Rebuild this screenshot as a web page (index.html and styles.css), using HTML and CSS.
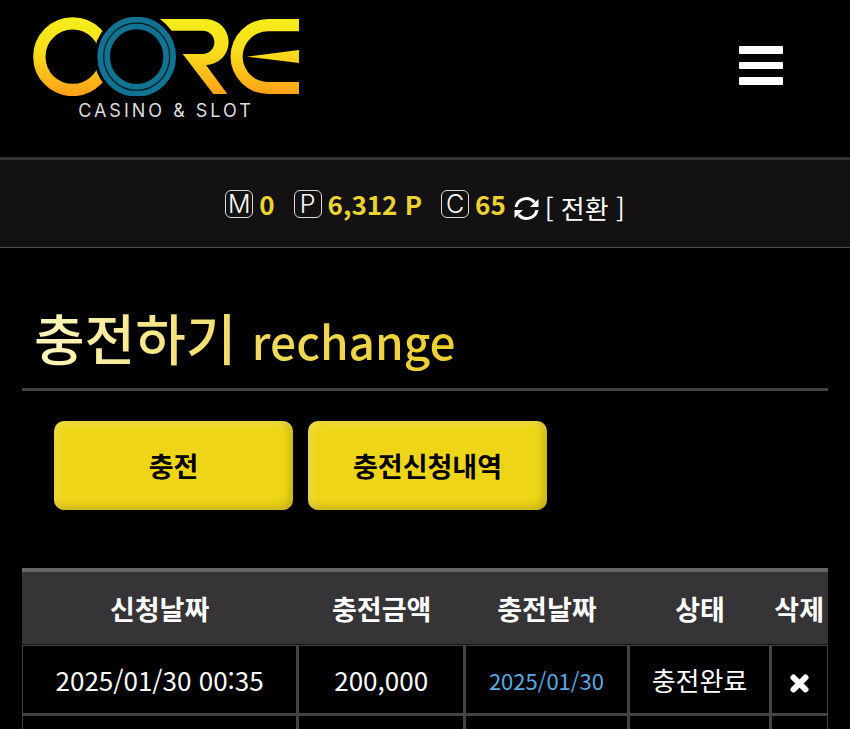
FILE: index.html
```html
<!DOCTYPE html>
<html lang="ko">
<head>
    <meta charset="UTF-8">
    <meta name="viewport" content="width=device-width, initial-scale=1.0">
    <title>CORE CASINO &amp; SLOT</title>
    <link rel="stylesheet" href="styles.css">
</head>
<body>
    <header class="header">
        <a class="logo" href="#" aria-label="CORE">
            <svg class="logo-mark" viewBox="39 36 798 237" aria-hidden="true">
                <defs>
                    <linearGradient id="gold" gradientUnits="userSpaceOnUse" x1="0" y1="36" x2="0" y2="273">
                        <stop offset="0" stop-color="#f6ee1c"/>
                        <stop offset="0.45" stop-color="#f8dc1c"/>
                        <stop offset="1" stop-color="#ff9f18"/>
                    </linearGradient>
                </defs>
                <circle cx="158" cy="155" r="100" fill="none" stroke="url(#gold)" stroke-width="37"/>
                <circle cx="350" cy="155" r="128" fill="#000"/>
                <ellipse cx="350" cy="155" rx="99" ry="101" fill="none" stroke="#127291" stroke-width="38"/>
                <ellipse cx="350" cy="155" rx="99" ry="101" fill="none" stroke="#04232f" stroke-width="4"/>
                <path fill="url(#gold)" d="M420 42H556a69 69 0 0 1 2 138L622 267H580L488 147H548a35 35 0 0 0 0-70H455Q440 57 420 42Z"/>
                <path fill="url(#gold)" d="M837 42H744a112 112 0 0 0 0 225H837V231H744a76 76 0 0 1 0-152H837Z"/>
                <path fill="url(#gold)" d="M680 155L837 135V174Z"/>
            </svg>
            <span class="logo-text">CASINO &amp; SLOT</span>
        </a>
        <button class="menu-btn" type="button" aria-label="메뉴">
            <svg width="44" height="39" viewBox="0 0 44 39" fill="#fff" aria-hidden="true">
                <rect width="44" height="8" rx="1"/>
                <rect y="16" width="44" height="7" rx="1"/>
                <rect y="31" width="44" height="8" rx="1"/>
            </svg>
        </button>
    </header>

    <div class="info">
        <div class="info-item"><span class="badge">M</span><b>0</b></div>
        <div class="info-item"><span class="badge">P</span><b>6,312 P</b></div>
        <div class="info-item"><span class="badge">C</span><b>65</b></div>
        <a class="convert" href="#">
            <svg width="25" height="25" viewBox="0 0 25 25" aria-hidden="true">
                <path d="M2 11A10.500 10.500 0 0 1 20.500 6.500M23 14A10.500 10.500 0 0 1 4.500 18.500" fill="none" stroke="#fff" stroke-width="3"/>
                <path d="M24.500 3V11H16ZM0.500 22V14H9Z" fill="#fff"/>
            </svg>
            <span>[ 전환 ]</span>
        </a>
    </div>

    <main class="content">
        <h1 class="title"><span>충전하기 <small>rechange</small></span></h1>

        <div class="buttons">
            <button class="btn" type="button">충전</button>
            <button class="btn" type="button">충전신청내역</button>
        </div>

        <table class="list">
            <colgroup>
                <col class="col-apply">
                <col class="col-amount">
                <col class="col-date">
                <col class="col-state">
                <col class="col-del">
            </colgroup>
            <thead>
                <tr>
                    <th>신청날짜</th>
                    <th>충전금액</th>
                    <th>충전날짜</th>
                    <th>상태</th>
                    <th>삭제</th>
                </tr>
            </thead>
            <tbody>
                <tr>
                    <td>2025/01/30 00:35</td>
                    <td>200,000</td>
                    <td class="date">2025/01/30</td>
                    <td>충전완료</td>
                    <td>
                        <button class="del-btn" type="button" aria-label="삭제">
                            <svg width="19" height="19" viewBox="0 0 19 19" aria-hidden="true">
                                <path d="M3.500 3.500L15.500 15.500M15.500 3.500L3.500 15.500" stroke="#fff" stroke-width="6" stroke-linecap="round"/>
                            </svg>
                        </button>
                    </td>
                </tr>
                <tr>
                    <td></td>
                    <td></td>
                    <td></td>
                    <td></td>
                    <td></td>
                </tr>
            </tbody>
        </table>
    </main>
</body>
</html>
```

FILE: styles.css
```css
* {
    box-sizing: border-box;
}
html {
    scrollbar-width: none;
}
body {
    margin: 0;
    background-color: #000;
    color: #fff;
    font-family: "Noto Sans CJK KR", "Noto Sans", sans-serif;
    font-size: 26px;
}
a {
    color: #fff;
    text-decoration: none;
}
button {
    padding: 0;
    border: 0;
    background: none;
    font-family: inherit;
    cursor: pointer;
}
svg {
    display: block;
}

/* header */
.header {
    display: flex;
    justify-content: space-between;
    align-items: flex-start;
    padding: 17px 67px 0 33px;
    height: 157px;
}
.logo {
    display: flex;
    flex-direction: column;
    align-items: center;
    gap: 5px;
}
.logo-mark {
    width: 266px;
    height: 79px;
}
.logo-text {
    color: #ddd;
    font-family: Inter, sans-serif;
    font-size: 18px;
    font-weight: 400;
    line-height: 20px;
    letter-spacing: 3px;
}
.menu-btn {
    margin-top: 29px;
}

/* balance bar */
.info {
    display: flex;
    justify-content: center;
    align-items: center;
    height: 91px;
    background-color: #131112;
    border-top: 3px solid #333;
    border-bottom: 1px solid #4a4a4a;
}
.info-item {
    display: flex;
    align-items: center;
    gap: 6px;
    margin-right: 19px;
}
.info-item:nth-child(3) {
    margin-right: 8px;
}
.info-item b {
    color: #ecd332;
    line-height: 30px;
}
.badge {
    width: 28px;
    height: 28px;
    border: 1px solid #ddd;
    border-radius: 6px;
    color: #fff;
    font-family: Inter, sans-serif;
    font-size: 25px;
    font-weight: 300;
    line-height: 26px;
    text-align: center;
}
.convert {
    display: flex;
    align-items: center;
    gap: 6px;
    padding-top: 9px;
    line-height: 30px;
}

/* content */
.content {
    padding: 0 22px;
}
.title {
    margin: 0;
    padding: 48px 12px 0;
    height: 143px;
    border-bottom: 3px solid #444;
    font-size: 55px;
    font-weight: 500;
    line-height: 80px;
}
.title span {
    background: linear-gradient(to right, #fff6c0, #f0da62 50%, #ead02c);
    background-clip: text;
    -webkit-background-clip: text;
    color: transparent;
}
.title small {
    font-size: 46px;
    font-weight: 500;
}
.buttons {
    display: flex;
    flex-wrap: wrap;
    gap: 15px;
    padding: 30px 32px 58px;
}
.btn {
    width: 239px;
    height: 89px;
    border-radius: 10px;
    background-color: #efd517;
    box-shadow: inset 3px 3px 8px rgba(255, 255, 255, 0.25), inset -3px -3px 8px rgba(0, 0, 0, 0.2);
    color: #000;
    font-size: 27px;
    font-weight: 700;
}

/* list */
.list {
    width: 100%;
    table-layout: fixed;
    border-spacing: 0;
    border-top: 4px solid #666;
}
.col-apply {
    width: 34.4%;
}
.col-amount {
    width: 20.7%;
}
.col-date {
    width: 20.3%;
}
.col-state {
    width: 17.7%;
}
.col-del {
    width: 6.9%;
}
.list th {
    height: 73px;
    padding: 0 2px 0 0;
    background-color: #363436;
    border-bottom: 1px solid #111;
    font-size: 27px;
    font-weight: 700;
    white-space: nowrap;
}
.list td {
    height: 70px;
    padding: 0;
    border-right: 3px solid #444;
    border-bottom: 3px solid #444;
    text-align: center;
    white-space: nowrap;
}
.list tbody tr:first-child td {
    height: 71px;
    border-top: 1px solid #444;
}
.list td:first-child {
    border-left: 1px solid #444;
}
.list td:last-child {
    border-right-width: 1px;
}
.list .date {
    color: #5aa9e0;
    font-size: 22px;
}
.del-btn {
    display: block;
    margin: 8px auto 0;
}
```
